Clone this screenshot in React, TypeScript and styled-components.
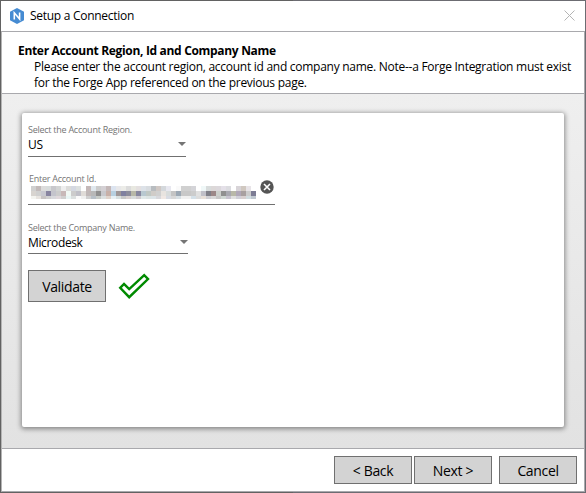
import React from 'react';
import styled, { createGlobalStyle } from 'styled-components';

const GlobalStyle = createGlobalStyle`
  * { box-sizing: border-box; }
  body {
    margin: 0;
    font-family: "Open Sans", "Noto Sans", sans-serif;
    font-size: 12px;
    color: #000;
    background: #626262;
  }
`;

const Frame = styled.div`
  display: flex;
  flex-direction: column;
  width: 586px;
  height: 493px;
  padding: 1px;
  background: linear-gradient(90deg, #626262 50%, #6c6c72 50%);
`;

const TitleBar = styled.header`
  display: flex;
  align-items: center;
  flex: 0 0 30px;
  padding: 0 10px 0 8px;
  background: #fff;
`;

const Title = styled.h1`
  flex: 1;
  margin: 0 0 0 5px;
  font-size: 12px;
  line-height: 16px;
  font-weight: 400;
  letter-spacing: -0.28px;
`;

const CloseIcon = styled.svg`
  display: block;
  width: 11px;
  height: 11px;
  margin-top: -1px;
`;

const Body = styled.div`
  display: flex;
  flex-direction: column;
  flex: 1;
  min-height: 0;
  border: 1px solid #a9a9ad;
  border-left-color: #b4b4b4;
`;

const Heading = styled.section`
  flex: 0 0 62px;
  padding: 11px 0 0 16px;
  background: #fff;
  border-bottom: 1px solid #a9a9ad;
`;

const HeadingTitle = styled.h2`
  margin: 0;
  font-size: 12px;
  line-height: 16px;
  font-weight: 700;
  letter-spacing: -0.32px;
`;

const Description = styled.p`
  margin: 0 0 0 16px;
  line-height: 16px;
  letter-spacing: -0.27px;
  white-space: nowrap;
`;

const Content = styled.main`
  flex: 1;
  min-height: 0;
  padding: 19px 20px 21px;
  background: linear-gradient(#efefef, #e2e2e2);
`;

const Card = styled.div`
  height: 100%;
  padding: 11px 6px;
  background: #fff;
  border-radius: 2px;
  box-shadow: 0 1px 5px 1px rgba(0, 0, 0, 0.42);
`;

const Field = styled.div<{ $width: number; $height: number; $gap?: number }>`
  width: ${(p) => p.$width}px;
  height: ${(p) => p.$height}px;
  border-bottom: 1px solid #707070;
  margin-bottom: ${(p) => p.$gap ?? 16}px;
`;

const Label = styled.div<{ $inset?: number }>`
  padding-left: ${(p) => p.$inset ?? 0}px;
  font-size: 9px;
  line-height: 12px;
  letter-spacing: -0.26px;
  color: #757575;
  white-space: nowrap;
`;

const SelectValue = styled.div`
  display: flex;
  align-items: center;
  justify-content: space-between;
  height: 17px;
  line-height: 17px;
  letter-spacing: -0.36px;
`;

const Arrow = styled.svg`
  display: block;
  width: 8px;
  height: 4px;
  margin-top: -1px;
`;

const MaskedRow = styled.div`
  display: flex;
  align-items: flex-start;
  justify-content: space-between;
  padding-left: 3px;
`;

const Mosaic = styled.svg`
  display: block;
  width: 225px;
  height: 13px;
  margin-top: 1px;
`;

const ClearIcon = styled.svg`
  display: block;
  width: 14px;
  height: 14px;
  margin: -5px 1px 0 0;
`;

const ValidateRow = styled.div`
  display: flex;
  align-items: center;
  gap: 12px;
`;

const Button = styled.button<{ $height: number }>`
  width: 78px;
  height: ${(p) => p.$height}px;
  padding: 2px 0 0;
  font-family: inherit;
  font-size: 14px;
  line-height: 18px;
  letter-spacing: -0.34px;
  color: #000;
  background: #d3d3d3;
  border: 1px solid #707070;
  border-radius: 0;
`;

const CheckIcon = styled.svg`
  display: block;
  width: 32px;
  height: 27px;
`;

const Footer = styled.footer`
  display: flex;
  justify-content: flex-end;
  align-items: flex-start;
  gap: 2px;
  flex: 0 0 43px;
  padding: 7px 7px 0 0;
  background: #fff;
  border-top: 1px solid #a9a9ad;
`;

const CancelSlot = styled.div`
  margin-left: 5px;
`;

const mosaicRows = [
  'd0d0d0 c2baba dcdcdc d8dcdc c8c8cc d2d4d4 eeeeee dcdcda d4d8e2 dce0e0 ffffff c4b8b8 e0e8ee cccccc d4d0d4 c4b8b8 dce4f0 e8e8ea ecece8 dcdcdc e8e8e0 e4e0e0 dde2e8 d8dce0 b8bcc0 d0c8c4 d4d8dc e8e8f0 ffffff fafafa d0d0d0 d0d0d0 d4d4d8 ffffff f0f8f8 d8dcdc dcd8d8 dcd8dc e4e0e8 dcdce0 ffffff d8d4d8 d0c8c0 e8e4e8 ffffff',
  'd8d4d0 d0d0d0 c8c8d0 8884a0 c4c4cc cccccc c8b8b8 f0f8f4 cccccc c0c0c8 e0dcd8 c0b8b8 b8b8b8 909090 c8c8cc c8b0a8 b8d0e0 a09898 8080a0 8c8c9c b8b8a8 8888a0 b8c8d0 c0c8c4 d0ccc8 d0d0d0 e8e4e0 d8dcdc c4c4c4 9ca8b4 c8c8c8 c8c8c8 cccccc e0e0e0 c0c0c8 808088 9c8888 ccd0cc 909090 a8a8b0 b8b8a8 b0a8b8 a8a0a0 cccccc 7c7c94',
  'f4f4f0 e8e4e0 c8c4c4 d0d0d0 d8d8dc e0d8dc d0d0d0 e8f4f4 dce0e0 fafafa f0f0f0 d0d0d0 b8c0c8 c8ccc8 dce0e0 e0d4cc e8f0f4 d8e0e0 c8c8c8 d8d0d0 d8dcdc d0ccd0 e0e8e8 dce4e4 dce4e8 d8d8dc f0e8e4 d8dce4 d8d8d8 d8e0e4 f0f0f0 f0f0f0 d4e0e8 dcdcdc e8e0d8 d0d0d4 d8d8d8 c8c8c8 d0d8d4 c8c4d0 e0e0e0 d0d0d8 d8d0d0 d0dce0 c0c8d0',
].map((row) => row.split(' '));

type SelectFieldProps = { label: string; value: string; width: number; height: number };

function SelectField({ label, value, width, height }: SelectFieldProps) {
  return (
    <Field $width={width} $height={height}>
      <Label>{label}</Label>
      <SelectValue>
        {value}
        <Arrow viewBox="0 0 8 4">
          <path d="M0 0h8L4 4z" fill="#757575" />
        </Arrow>
      </SelectValue>
    </Field>
  );
}

function AppLogo() {
  return (
    <svg width="16" height="16" viewBox="0 0 16 16">
      <path d="M8 0l7 3.8v8.4L8 16l-7-3.8V3.8z" fill="#458bd2" />
      <path d="M5.3 11.6V4.8l5.3 6.2V4.4" fill="none" stroke="#fff" strokeWidth="1.6" />
    </svg>
  );
}

export default function App() {
  return (
    <>
      <GlobalStyle />
      <Frame>
        <TitleBar>
          <AppLogo />
          <Title>Setup a Connection</Title>
          <CloseIcon viewBox="0 0 11 11">
            <path d="M.5.5l10 10M10.5.5l-10 10" stroke="#b4b4b4" strokeWidth="1" />
          </CloseIcon>
        </TitleBar>
        <Body>
          <Heading>
            <HeadingTitle>Enter Account Region, Id and Company Name</HeadingTitle>
            <Description>
              Please enter the account region, account id and company name. Note--a Forge Integration must exist
              <br />
              for the Forge App referenced on the previous page.
            </Description>
          </Heading>
          <Content>
            <Card>
              <SelectField label="Select the Account Region." value="US" width={158} height={33} />
              <Field $width={247} $height={32} $gap={17}>
                <Label $inset={1}>Enter Account Id.</Label>
                <MaskedRow>
                  <Mosaic viewBox="0 0 225 13" shapeRendering="crispEdges">
                    {mosaicRows.map((row, y) =>
                      row.map((color, x) => (
                        <rect key={`${x}-${y}`} x={x * 5} y={y * 5} width="5" height="5" fill={`#${color}`} />
                      )),
                    )}
                  </Mosaic>
                  <ClearIcon viewBox="0 0 14 14">
                    <circle cx="7" cy="7" r="6.7" fill="#555" />
                    <path d="M4 4l6 6M10 4l-6 6" stroke="#fff" strokeWidth="1.6" />
                  </ClearIcon>
                </MaskedRow>
              </Field>
              <SelectField label="Select the Company Name." value="Microdesk" width={160} height={32} />
              <ValidateRow>
                <Button $height={32}>Validate</Button>
                <CheckIcon viewBox="0 0 32 27">
                  <path
                    d="M2.2 14.8L6 11l5.2 5.2L26.2 2.2 30 6 11.2 24.2z"
                    fill="none"
                    stroke="#008a00"
                    strokeWidth="2.4"
                  />
                </CheckIcon>
              </ValidateRow>
            </Card>
          </Content>
          <Footer>
            <Button $height={28}>&lt; Back</Button>
            <Button $height={28}>Next &gt;</Button>
            <CancelSlot>
              <Button $height={28}>Cancel</Button>
            </CancelSlot>
          </Footer>
        </Body>
      </Frame>
    </>
  );
}
